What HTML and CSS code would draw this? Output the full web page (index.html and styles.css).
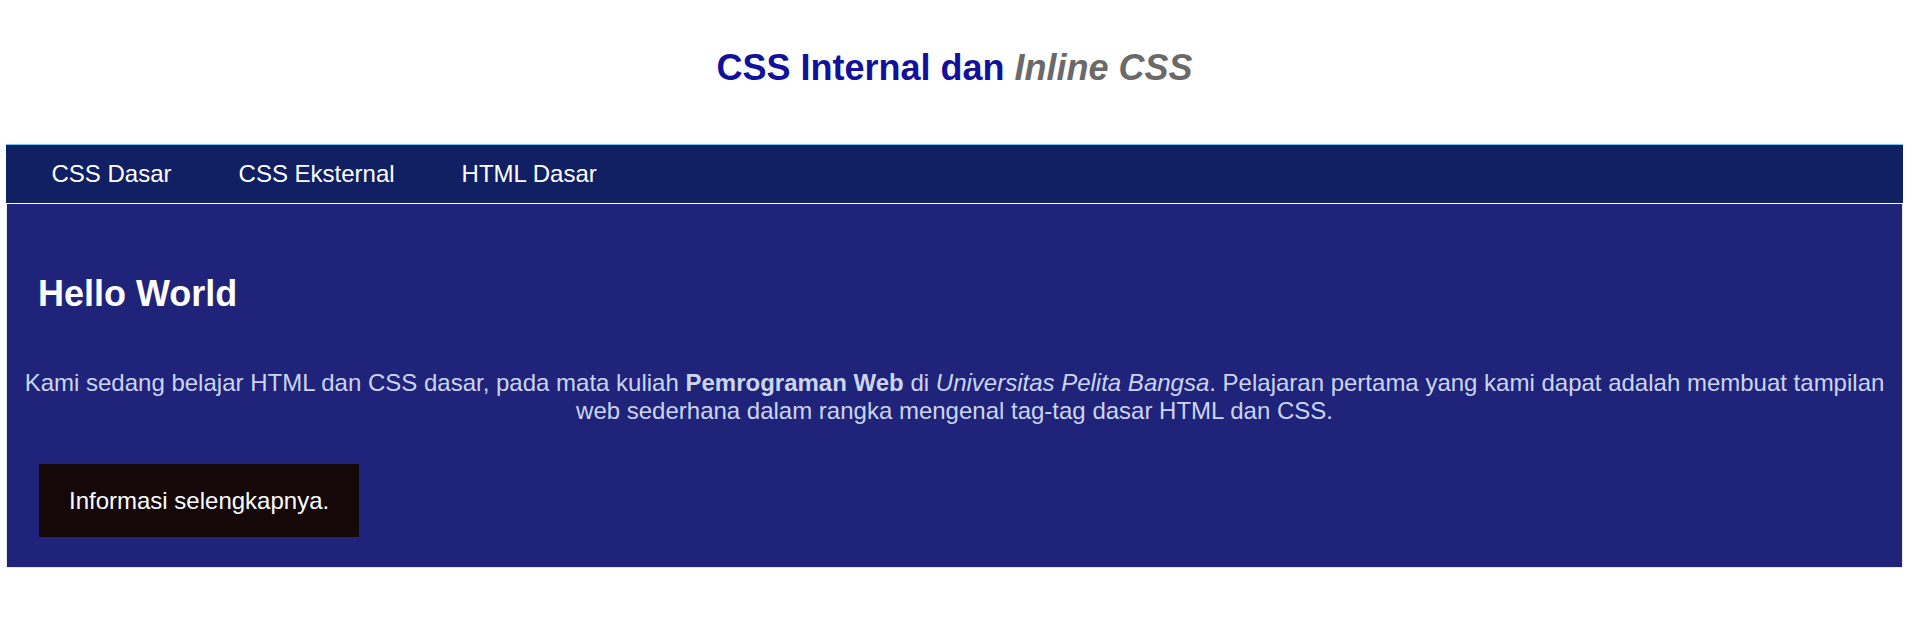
FILE: index.html
```html
<!DOCTYPE html>
<html lang="id">
<head>
<meta charset="utf-8">
<title>CSS Internal dan Inline CSS</title>
<link rel="stylesheet" href="styles.css">
</head>
<body>
<div class="page">
  <header class="header">
    <h1 class="title">CSS Internal dan <i class="title-accent">Inline CSS</i></h1>
  </header>
  <nav class="nav">
    <a class="nav-link" href="#">CSS Dasar</a>
    <a class="nav-link" href="#">CSS Eksternal</a>
    <a class="nav-link" href="#">HTML Dasar</a>
  </nav>
  <section class="content">
    <h2 class="content-title">Hello World</h2>
    <p class="content-text">Kami sedang belajar HTML dan CSS dasar, pada mata kuliah <b>Pemrograman Web</b> di <i>Universitas Pelita Bangsa</i>. Pelajaran pertama yang kami dapat adalah membuat tampilan web sederhana dalam rangka mengenal tag-tag dasar HTML dan CSS.</p>
    <a class="btn" href="#">Informasi selengkapnya.</a>
  </section>
</div>
</body>
</html>
```

FILE: styles.css
```css
html, body {
  margin: 0;
  padding: 0;
  background: #ffffff;
}

body {
  font-family: "Liberation Sans", Arial, sans-serif;
}

.page {
  margin-left: 6px;
  width: 1897px;
}

.header {
  padding: 47px 0 55px;
  text-align: center;
}

.title {
  margin: 0;
  font-size: 36px;
  line-height: 42px;
  font-weight: bold;
  color: #11119c;
}

.title-accent {
  color: #6b6969;
}

.nav {
  display: flex;
  padding-left: 12px;
  background: #111f63;
  border-top: 1px solid #6ec6ee;
  border-bottom: 1px solid #ffffff;
}

.nav-link {
  display: block;
  padding: 0 33.5px;
  font-size: 24px;
  line-height: 58px;
  color: #ffffff;
  text-decoration: none;
}

.content {
  background: #1f237a;
  border: 1px solid #e8e8e8;
  border-top: none;
  padding: 69px 0 30px;
}

.content-title {
  margin: 0 0 0 31px;
  font-size: 36px;
  line-height: 42px;
  font-weight: bold;
  color: #ffffff;
}

.content-text {
  margin: 54px 0 39px;
  padding: 0 10px;
  font-size: 24px;
  line-height: 28px;
  color: #ccd5ee;
  text-align: center;
}

.btn {
  display: inline-block;
  margin-left: 32px;
  padding: 23px 30px;
  font-size: 24px;
  line-height: 27px;
  background: #140808;
  color: #ffffff;
  text-decoration: none;
}
```
